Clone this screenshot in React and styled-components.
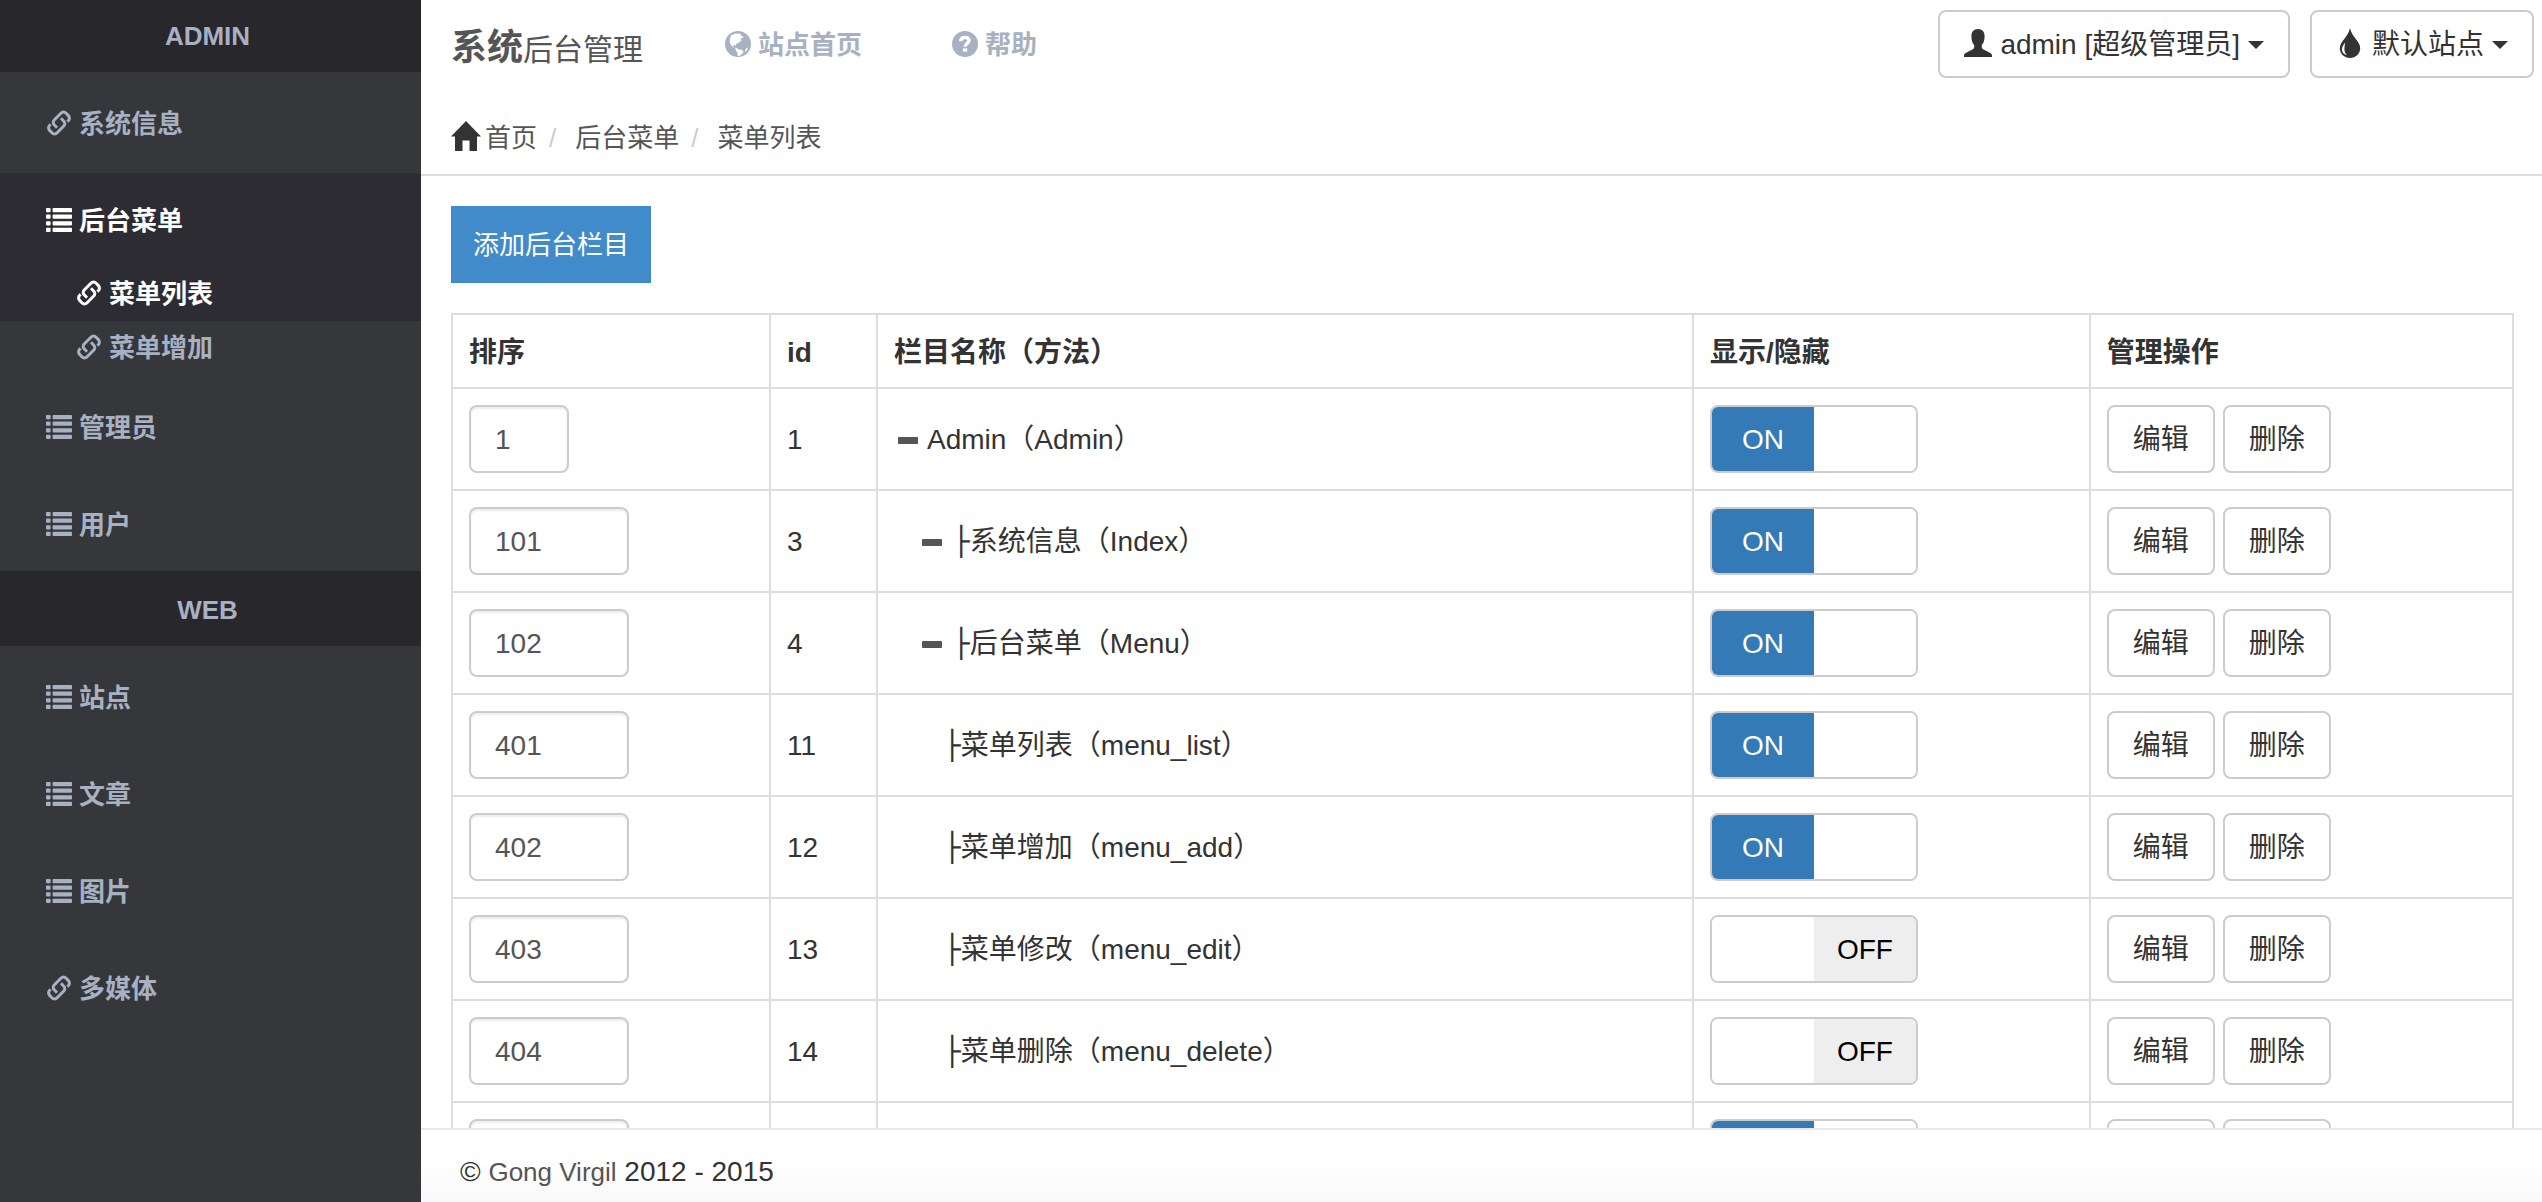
import React, { useState } from "react";
import styled, { createGlobalStyle, css } from "styled-components";

const colors = {
  text: "#333",
  muted: "#555",
  border: "#ddd",
  control: "#ccc",
  slate: "#a7b1c2",
  sidebar: "#36373b",
  sidebarHead: "#28272c",
  sidebarActive: "#2d2c32",
};

const GlobalStyle = createGlobalStyle`
  *, *::before, *::after { box-sizing: border-box; }
  body {
    margin: 0;
    background: #fff;
    color: ${colors.text};
    font-family: "Liberation Sans", "Noto Sans CJK SC", sans-serif;
    font-size: 28px;
    line-height: 40px;
  }
  a { color: inherit; text-decoration: none; }
  ul, ol { margin: 0; padding: 0; list-style: none; }
  button, input { font: inherit; }
`;

/* ---------- layout ---------- */

const Page = styled.div`
  display: grid;
  grid-template-columns: 421px minmax(0, 1fr);
  height: 100vh;
`;

const Sidebar = styled.aside`
  background: ${colors.sidebar};
  color: ${colors.slate};
  font-size: 26px;
  font-weight: bold;
  overflow: hidden;
`;

const Main = styled.div`
  display: flex;
  flex-direction: column;
  min-height: 0;
`;

/* ---------- sidebar ---------- */

const GroupTitle = styled.h2`
  margin: 0;
  padding: ${(p) => (p.$top ? "16px 6px 16px 0" : "19px 6px 16px 0")};
  background: ${colors.sidebarHead};
  font-size: 26px;
  line-height: 40px;
  text-align: center;
`;

const Group = styled.ul`
  padding-top: 4px;
`;

const Item = styled.li`
  &:last-child > a {
    padding-bottom: 26px;
  }
`;

const ItemLink = styled.a`
  display: flex;
  align-items: center;
  gap: 7px;
  padding: 28px 46px 29px;
  ${(p) =>
    p.$open &&
    css`
      padding-bottom: 26px;
      background: ${colors.sidebarActive};
      color: #fff;
    `}
`;

const SubList = styled.ul`
  padding-bottom: 5px;
`;

const SubLink = styled.a`
  display: flex;
  align-items: center;
  gap: 7px;
  padding: 7px 46px 7px 76px;
  ${(p) =>
    p.$active &&
    css`
      background: ${colors.sidebarActive};
      color: #fff;
    `}
`;

/* ---------- header ---------- */

const TopBar = styled.header`
  display: flex;
  align-items: center;
  height: 88px;
  padding: 0 8px 0 30px;
`;

const Brand = styled.a`
  padding-top: 9px;
  color: ${colors.muted};
  font-size: 30px;
  strong {
    font-size: 36px;
  }
`;

const TopNav = styled.nav`
  display: flex;
  gap: 90px;
  margin-left: 82px;
  color: ${colors.slate};
  font-size: 26px;
  font-weight: bold;
`;

const TopLink = styled.a`
  display: flex;
  align-items: center;
  gap: 7px;
  padding-top: 2px;
  svg {
    margin-bottom: 3px;
  }
`;

const Actions = styled.div`
  display: flex;
  gap: 20px;
  margin-left: auto;
`;

const Button = styled.button`
  display: inline-flex;
  align-items: center;
  gap: 8px;
  padding: 13px 24px 11px;
  border: 2px solid ${colors.control};
  border-radius: 8px;
  background: #fff;
  color: ${colors.text};
  cursor: pointer;
  svg {
    margin-bottom: 4px;
  }
`;

const Caret = styled.span`
  border: 8px solid transparent;
  border-top-color: currentColor;
  border-bottom: 0;
`;

const Crumbs = styled.ol`
  display: flex;
  padding: 30px 30px 16px;
  border-bottom: 2px solid ${colors.border};
  color: ${colors.muted};
  font-size: 26px;
`;

const Crumb = styled.li`
  display: flex;
  align-items: center;
  gap: 4px;
  svg {
    margin-bottom: 4px;
  }
  & + &::before {
    content: "/";
    padding: 0 15px 0 12px;
    color: ${colors.control};
  }
`;

/* ---------- content ---------- */

const Content = styled.main`
  flex: 1;
  min-height: 0;
  overflow: auto;
  scrollbar-width: none;
  padding: 30px 28px 0 30px;
`;

const AddButton = styled.button`
  display: block;
  margin-bottom: 30px;
  padding: 19px 22px 18px;
  border: 0;
  background: #428bca;
  color: #fff;
  font-size: 26px;
  cursor: pointer;
`;

const Table = styled.table`
  width: 100%;
  border-collapse: collapse;
  table-layout: fixed;
  th,
  td {
    padding: 16px;
    border: 2px solid ${colors.border};
    text-align: left;
  }
  th {
    padding: 18px 16px 14px;
  }
`;

const Col = styled.col`
  width: ${(p) => p.$share}%;
`;

const SortInput = styled.input`
  display: block;
  width: ${(p) => (p.$short ? 100 : 160)}px;
  height: 68px;
  padding: 13px 24px 11px;
  border: 2px solid ${colors.control};
  border-radius: 8px;
  background: #fff;
  color: ${colors.muted};
  box-shadow: inset 0 2px 2px rgba(0, 0, 0, 0.075);
`;

const CellText = styled.div`
  display: flex;
  align-items: center;
  padding-top: 2px;
  padding-left: ${(p) => (p.$level || 0) * 24}px;
`;

const Fold = styled.button`
  display: flex;
  padding: 0 4px;
  margin-right: 5px;
  border: 0;
  background: none;
  color: ${colors.muted};
  cursor: pointer;
`;

const Branch = styled.span`
  margin-left: 2px;
  font-family: "DejaVu Sans Mono", monospace;
`;

const Toggle = styled.label`
  position: relative;
  display: flex;
  width: 208px;
  border: 2px solid ${colors.control};
  border-radius: 8px;
  overflow: hidden;
  cursor: pointer;
  input {
    position: absolute;
    inset: 0;
    margin: 0;
    opacity: 0;
  }
`;

const Half = styled.span`
  flex: 1;
  height: 64px;
  line-height: 66px;
  text-align: center;
  background: ${(p) => p.$fill || "#fff"};
  color: ${(p) => (p.$dark ? "#000" : "#fff")};
`;

const RowActions = styled.div`
  display: flex;
  gap: 8px;
`;

const Footer = styled.footer`
  padding: 22px 39px 10px;
  border-top: 2px solid #e7e9e9;
  background: linear-gradient(#fff 40%, #f9f9f9);
  a {
    color: ${colors.muted};
    font-size: 26px;
  }
`;

/* ---------- icons ---------- */

const Svg = ({ w = 26, h = 26, children }) => (
  <svg width={w} height={h} viewBox={`0 0 ${w} ${h}`} fill="currentColor" aria-hidden="true">
    {children}
  </svg>
);

const LinkIcon = () => (
  <Svg h={28}>
    <g fill="none" stroke="currentColor" strokeWidth="3" transform="translate(1 0)">
      <path d="M20.400 11.600l.9-.9a3.600 3.600 0 0 0 .1-5.100l-2.300-2.400a3.600 3.600 0 0 0-5.200 0L7.200 10a3.400 3.400 0 0 0 0 4.800l2.800 2.900" />
      <path d="M3.600 14.400l-.9.900a3.600 3.600 0 0 0-.1 5.100l2.300 2.400a3.600 3.600 0 0 0 5.200 0L16.800 16a3.400 3.400 0 0 0 0-4.800l-2.800-2.900" />
    </g>
  </Svg>
);

const ListIcon = () => (
  <Svg h={26}>
    {[0, 6.6, 13.2, 19.8].map((y) => (
      <g key={y}>
        <rect x="0" y={y} width="4.600" height="4.200" rx="0.800" />
        <rect x="6.600" y={y} width="19.400" height="4.200" rx="0.800" />
      </g>
    ))}
  </Svg>
);

const GlobeIcon = () => (
  <Svg>
    <circle cx="13" cy="13" r="13" />
    <path
      fill="#fff"
      d="M6 4.500 9.500 2.800l4.200-.4 2.600 1.200-.6 1.600 2-.4.800 1.600-1.800.4-1 2.200 1 1.200-2.200.6-1.800 1.800-1.800.4.200 1.800-2.200-.8-.8 1.400 1.200 1.400 2.200.2 2.600 1.400 2.600.4 1.800 1.400-1 2.200-1.600 1.600-1.800 1-1.400-.2-.2-2.800-1.600-2.400-.4-2.200-2.600-1.400-2.200-2.200-1-2.800.2-3.200z"
    />
    <path fill="#fff" d="m21.400 17.200 1.600-.6-.8 2.400-1.800 1.800-.6-1.200z" />
  </Svg>
);

const QuestionIcon = () => (
  <Svg>
    <circle cx="13" cy="13" r="13" />
    <path
      fill="none"
      stroke="#fff"
      strokeWidth="3.400"
      d="M8.800 10.200c0-2.500 1.800-3.700 4.100-3.700 2.400 0 4.100 1.100 4.100 3.100 0 2.700-3.900 2.700-3.900 6.200"
    />
    <rect x="11" y="17.400" width="4.200" height="3.200" fill="#fff" />
  </Svg>
);

const HomeIcon = () => (
  <Svg w={30} h={30}>
    <path fill="#333" d="M15 0 30 15.500h-4V30h-7.500V19.500h-7V30H4V15.500H0z" />
  </Svg>
);

const UserIcon = () => (
  <Svg w={28} h={28}>
    <path d="M14 0c4.400 0 6.600 2.800 6.600 7.400 0 3.600-1 6.600-2.800 8.600v2c0 1.200.6 1.800 1.800 2.500l6.200 3.300c1.500.8 2.200 1.500 2.200 2.900V28H0v-1.300c0-1.400.7-2.100 2.200-2.900l6.200-3.300c1.200-.7 1.800-1.300 1.800-2.500v-2c-1.800-2-2.800-5-2.800-8.600C7.400 2.800 9.600 0 14 0z" />
  </Svg>
);

const DropIcon = () => (
  <Svg w={28} h={30}>
    <path d="M14 0c1 4.500 3.300 7.500 5.800 11 2.400 3.400 4.400 5.600 4.400 9.300C24.200 25.800 19.700 30 14 30S3.800 25.800 3.800 20.300c0-3.700 2-5.900 4.400-9.300C10.700 7.500 13 4.500 14 0z" />
    <path
      fill="#fff"
      d="M9.200 14.500c-2.200 3-3.600 5.200-3.200 7.700.5 2.800 2.400 4.400 4.800 4.800-1.500-1.600-2.400-3.600-2.400-6 0-2.200.4-4.200.8-6.500z"
    />
  </Svg>
);

const MinusIcon = () => (
  <Svg w={20} h={7}>
    <rect width="20" height="7" rx="0.800" />
  </Svg>
);

/* ---------- data ---------- */

const rows = [
  { sort: "1", id: "1", level: 0, fold: true, name: "Admin（Admin）", on: true },
  { sort: "101", id: "3", level: 1, fold: true, branch: true, name: "系统信息（Index）", on: true },
  { sort: "102", id: "4", level: 1, fold: true, branch: true, name: "后台菜单（Menu）", on: true },
  { sort: "401", id: "11", level: 2, branch: true, name: "菜单列表（menu_list）", on: true },
  { sort: "402", id: "12", level: 2, branch: true, name: "菜单增加（menu_add）", on: true },
  { sort: "403", id: "13", level: 2, branch: true, name: "菜单修改（menu_edit）", on: false },
  { sort: "404", id: "14", level: 2, branch: true, name: "菜单删除（menu_delete）", on: false },
  { sort: "", id: "", level: 2, name: "", on: true },
];

/* ---------- parts ---------- */

function NavItem({ icon: Icon = ListIcon, children }) {
  return (
    <Item>
      <ItemLink href="#">
        <Icon />
        {children}
      </ItemLink>
    </Item>
  );
}

function Switch({ initial }) {
  const [on, setOn] = useState(initial);
  return (
    <Toggle>
      <input
        type="checkbox"
        aria-label="显示/隐藏"
        checked={on}
        onChange={(e) => setOn(e.target.checked)}
      />
      <Half $fill={on && "#337ab7"}>{on ? "ON" : ""}</Half>
      <Half $fill={!on && "#eee"} $dark>
        {on ? "" : "OFF"}
      </Half>
    </Toggle>
  );
}

function MenuRow({ row }) {
  return (
    <tr>
      <td>
        <SortInput type="text" aria-label="排序" $short={row.sort.length === 1} defaultValue={row.sort} />
      </td>
      <td>
        <CellText>{row.id}</CellText>
      </td>
      <td>
        <CellText $level={row.level}>
          {row.fold && (
            <Fold type="button" aria-label="折叠">
              <MinusIcon />
            </Fold>
          )}
          {row.branch && <Branch>├</Branch>}
          {row.name}
        </CellText>
      </td>
      <td>
        <Switch initial={row.on} />
      </td>
      <td>
        <RowActions>
          <Button type="button">编辑</Button>
          <Button type="button">删除</Button>
        </RowActions>
      </td>
    </tr>
  );
}

export default function App() {
  return (
    <>
      <GlobalStyle />
      <Page>
        <Sidebar>
          <GroupTitle $top>ADMIN</GroupTitle>
          <Group>
            <NavItem icon={LinkIcon}>系统信息</NavItem>
            <li>
              <ItemLink href="#" $open>
                <ListIcon />
                后台菜单
              </ItemLink>
              <SubList>
                <li>
                  <SubLink href="#" $active>
                    <LinkIcon />
                    菜单列表
                  </SubLink>
                </li>
                <li>
                  <SubLink href="#">
                    <LinkIcon />
                    菜单增加
                  </SubLink>
                </li>
              </SubList>
            </li>
            <NavItem>管理员</NavItem>
            <NavItem>用户</NavItem>
          </Group>
          <GroupTitle>WEB</GroupTitle>
          <Group>
            <NavItem>站点</NavItem>
            <NavItem>文章</NavItem>
            <NavItem>图片</NavItem>
            <NavItem icon={LinkIcon}>多媒体</NavItem>
          </Group>
        </Sidebar>

        <Main>
          <TopBar>
            <Brand href="#">
              <strong>系统</strong>后台管理
            </Brand>
            <TopNav>
              <TopLink href="#">
                <GlobeIcon />
                站点首页
              </TopLink>
              <TopLink href="#">
                <QuestionIcon />
                帮助
              </TopLink>
            </TopNav>
            <Actions>
              <Button type="button">
                <UserIcon />
                admin [超级管理员]
                <Caret />
              </Button>
              <Button type="button">
                <DropIcon />
                默认站点
                <Caret />
              </Button>
            </Actions>
          </TopBar>

          <Crumbs>
            <Crumb>
              <HomeIcon />
              <a href="#">首页</a>
            </Crumb>
            <Crumb>
              <a href="#">后台菜单</a>
            </Crumb>
            <Crumb>
              <a href="#">菜单列表</a>
            </Crumb>
          </Crumbs>

          <Content>
            <AddButton type="button">添加后台栏目</AddButton>
            <Table>
              <colgroup>
                <Col $share={15.43} />
                <Col $share={5.19} />
                <Col $share={39.59} />
                <Col $share={19.26} />
                <Col $share={20.53} />
              </colgroup>
              <thead>
                <tr>
                  <th>排序</th>
                  <th>id</th>
                  <th>栏目名称（方法）</th>
                  <th>显示/隐藏</th>
                  <th>管理操作</th>
                </tr>
              </thead>
              <tbody>
                {rows.map((row, i) => (
                  <MenuRow key={i} row={row} />
                ))}
              </tbody>
            </Table>
          </Content>

          <Footer>
            © <a href="#">Gong Virgil</a> 2012 - 2015
          </Footer>
        </Main>
      </Page>
    </>
  );
}
